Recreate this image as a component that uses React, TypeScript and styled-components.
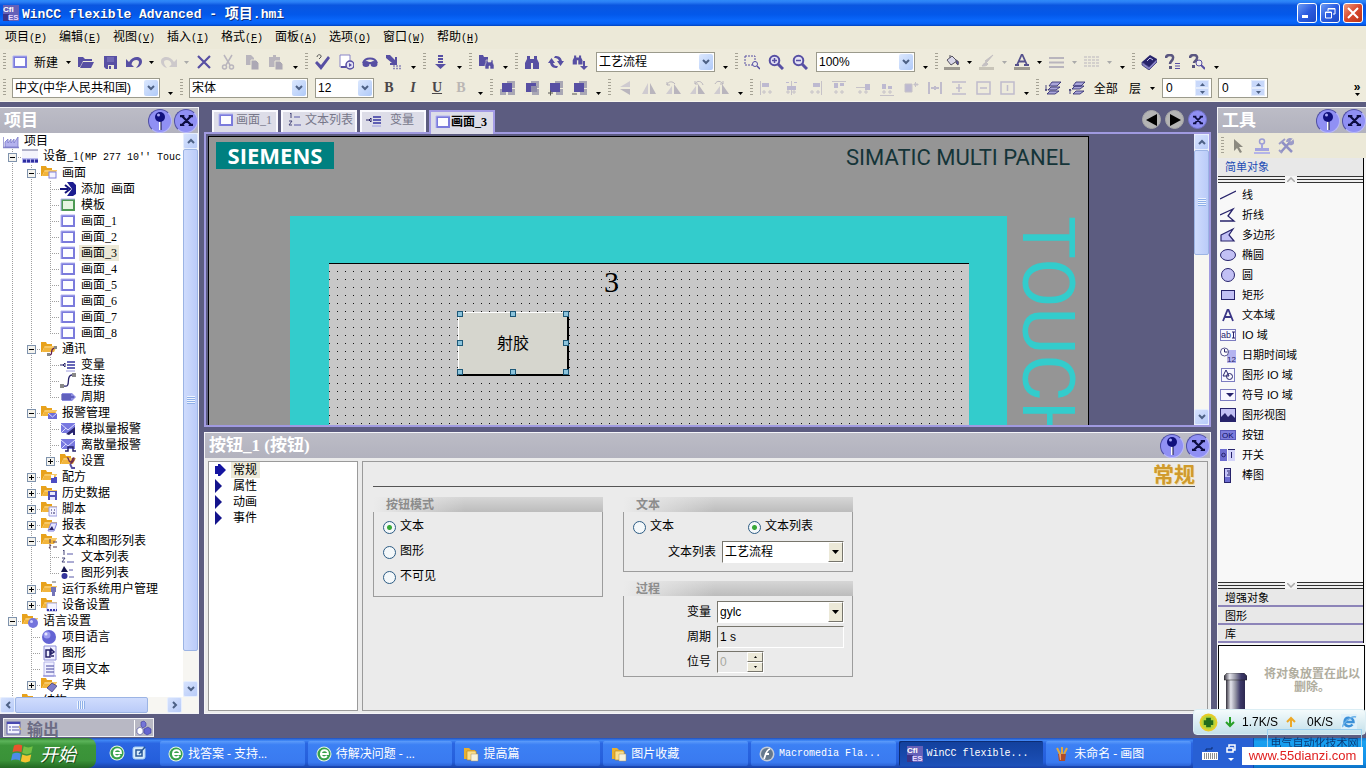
import React from 'react';
import styled, { createGlobalStyle, css } from 'styled-components';

const cjk = '"Noto Sans CJK SC", sans-serif';
const song = `"Liberation Serif", ${cjk}`;
const ui = `"Liberation Sans", ${cjk}`;

const Global = createGlobalStyle`
  * { box-sizing: border-box; }
  body { margin: 0; overflow: hidden; font: 12px/16px ${song}; color: #000; background: #5c5c80; }
  button, input, select { font: inherit; color: inherit; margin: 0; padding: 0; border-radius: 0; }
  button { background: none; border: 0; }
  svg { display: block; flex: none; }
`;

const Page = styled.div`
  height: 100vh;
  display: flex;
  flex-direction: column;
  background: #5c5c80;
`;

/* ---------- text ---------- */

const Mono = styled.span`
  font-family: "Liberation Mono", monospace;
  font-size: 10px;
`;

/* ---------- icons ---------- */

const V = '#574fa3';
const N = '#27236b';
const G = '#b9b5bd';
const L = '#c2c0f4';

const screenIcon = (edge: string, fill: string) => (
  <>
    <rect x="1" y="2" width="14" height="12" fill={edge} />
    <rect x="3" y="4" width="10" height="8" fill={fill} />
    <path d="M1 14V2h14" fill="none" stroke="#b4b4f0" strokeWidth="1" />
  </>
);
const folder = (
  <>
    <path d="M0 1h5l1 2h5v2H4L1 11H0z" fill="#e8a21c" />
    <path d="M4 5h12l-3 6H1z" fill="#f2b53c" />
    <path d="M4 6h11" stroke="#fbdc94" />
  </>
);
const magnifier = (
  <>
    <circle cx="6.5" cy="6.5" r="4.8" fill="#e4e2f4" stroke={V} strokeWidth="2" />
    <path d="M10 10l5 5" stroke={V} strokeWidth="3" />
  </>
);
const binoc = (
  <path d="M3 2h3v3h4V2h3v3l2 4v6H9V9H7v6H1V9l2-4z" fill={V} />
);
const turnTri = (
  <>
    <path d="M7 3v11H1z" fill="#cfcbd0" />
    <path d="M9 3v11h6z" fill={G} />
  </>
);
const leanTri = (
  <>
    <path d="M7 6v8H1z" fill="#cfcbd0" />
    <path d="M9 4v10h7z" fill={G} />
  </>
);
const pages = (extra: React.ReactNode, a: string, b: string) => (
  <>
    <rect x="8" y="1" width="8" height="7" fill="#a9a7b4" />
    <rect x="1" y="9" width="6" height="6" fill={a} />
    <rect x="9" y="9" width="7" height="6" fill={b} />
    <rect x="3" y="3" width="10" height="9" fill={V} />
    {extra}
  </>
);
const alignIcon = (line: string, a: string) => (
  <>
    <path d={line} stroke="#c6c2c8" fill="none" strokeWidth="1" />
    <path d={a} fill="#bdb9d0" />
    <path d="M3 12h4M5 10v4M9 12h4M11 10v4" stroke="#c6c2c8" />
  </>
);

const icons: Record<string, React.ReactNode> = {
  screen: screenIcon('#7b7bdc', '#fdfdff'),
  template: screenIcon('#4d9a54', '#e6f5e2'),
  open: <path d="M0 3h5l2 2h7v2H5l-3 6H0zM5 8h11l-3 6H2z" fill={V} />,
  save: (
    <>
      <path d="M2 2h13v13H4l-2-2z" fill={V} />
      <path d="M5 3h7v5H5z" fill="#6f68b4" />
      <path d="M6 11h6v4H6z" fill="#ece9d8" />
      <path d="M7 12h2v3H7z" fill={V} />
    </>
  ),
  undo: <path d="M0 5v8h8L5.500 10.500C6 5 13 5 13 8c0 3-2 4-3 6 4-1 6-4 6-6.500C16 2 7 1 3 8z" fill={V} />,
  redo: <path d="M16 5v8H8l2.500-2.500C10 5 3 5 3 8c0 3 2 4 3 6-4-1-6-4-6-6.500C0 2 9 1 13 8z" fill="#cdc9cb" />,
  del: <path d="M2 2l12 12M14 2L2 14" stroke={V} strokeWidth="2.200" fill="none" />,
  cut: (
    <g fill="none" stroke={G} strokeWidth="1.500">
      <path d="M4 1l6 10M12 1L6 11" />
      <circle cx="4.500" cy="13" r="2" />
      <circle cx="11.500" cy="13" r="2" />
    </g>
  ),
  copy: (
    <>
      <path d="M2 1h5l3 3v7H2z" fill={G} />
      <path d="M7 6h5l3 3v7H7z" fill="#aca8b4" stroke="#ece9d8" />
    </>
  ),
  paste: (
    <>
      <path d="M1 3h4V1h3v2h4v10H1z" fill={G} />
      <path d="M7 7h5l3 3v6H7z" fill="#aca8b4" stroke="#ece9d8" />
    </>
  ),
  check: (
    <>
      <path d="M1 9l2-2 4 4 7-9 2 2-9 12z" fill={V} />
      <path d="M3 3c0-3 5-3 4 0L5 5" fill="none" stroke="#555" />
    </>
  ),
  run: (
    <>
      <path d="M2 1h10v12H2z" fill="#fff" stroke="#8a85c8" />
      <path d="M3 13h5" stroke={V} strokeWidth="2" />
      <circle cx="12" cy="11" r="4" fill="#e4e2f4" stroke={V} strokeWidth="1.500" />
      <path d="M11 9l3 2-3 2z" fill={V} />
    </>
  ),
  glasses: (
    <>
      <path d="M1 9c2-6 12-6 14 0" fill="none" stroke={V} strokeWidth="2" />
      <ellipse cx="4" cy="10" rx="3.500" ry="3" fill={V} />
      <ellipse cx="12" cy="10" rx="3.500" ry="3" fill={V} />
      <path d="M7 9h2" stroke={V} strokeWidth="2" />
    </>
  ),
  transfer: (
    <>
      <path d="M0 1h4l5 5V3h2v8H4V9h2L0 4z" fill={V} />
      <path d="M7 12h9M7 14.500h9" stroke="#8d89b8" strokeWidth="1.500" strokeDasharray="2 1" />
    </>
  ),
  down: <path d="M6 1h5v2H6zM6 4h5v2H6zM6 7h5v2H6zM3 10h11l-5.500 5z" fill={V} />,
  findin: (
    <>
      <path d="M1 1h4l1 2h4v9H1z" fill={V} />
      <path d="M8 6h2v2h3V6h2v3l1 2v4h-4v-3h-1v3H7v-4l1-2z" fill={V} stroke="#ece9d8" strokeWidth=".6" />
    </>
  ),
  binoc,
  refresh: (
    <>
      <path d="M0 9l3.500-5L7 9H5c1 3 3 3 5 3l-1 2c-4 0-6-1-7-5z" fill={V} />
      <path d="M16 7l-3.500 5L9 7h2c-1-3-3-3-5-3l1-2c4 0 6 1 7 5z" fill={V} />
    </>
  ),
  findnext: (
    <>
      <g transform="scale(.7)">{binoc}</g>
      <path d="M11 7h2v5h3l-4 4-4-4h3z" fill={V} />
    </>
  ),
  marquee: (
    <>
      <rect x="1" y="2" width="10" height="9" fill="none" stroke={V} strokeDasharray="2 1" />
      <circle cx="11" cy="10" r="2.500" fill="#eee" stroke={V} />
      <path d="M13 12l3 3" stroke={V} strokeWidth="1.500" />
    </>
  ),
  zoomin: <>{magnifier}<path d="M4 6.500h5M6.500 4v5" stroke={V} strokeWidth="1.500" /></>,
  zoomout: <>{magnifier}<path d="M4 6.500h5" stroke={V} strokeWidth="1.500" /></>,
  fill: (
    <>
      <path d="M3 6l5-4 5 5-6 4z" fill="#d8d6e8" stroke="#55515f" />
      <path d="M6 4V1M12 6c3 1 3 3 2 5-2-1-2-3-2-5z" fill={V} stroke="#55515f" />
      <rect x="0" y="13" width="16" height="3" fill="#9d9990" />
    </>
  ),
  brush: (
    <>
      <path d="M14 1L8 8l-2-1zM7 8l2 2c-1 2-4 2-6 2 1-1 2-3 4-4z" fill="#c4c0c2" stroke="#c4c0c2" />
      <rect x="0" y="13" width="15" height="3" fill="#c8c4b8" />
    </>
  ),
  font: (
    <>
      <path d="M3 11L8 0l5 11M5 7.500h6M1 11h4M10 11h5" stroke="#55518c" strokeWidth="1.800" fill="none" />
      <rect x="0" y="13" width="16" height="3" fill="#9d9990" />
    </>
  ),
  lines: <path d="M0 4h15M0 8.500h15M0 13h15" stroke={G} strokeWidth="2" />,
  dashes: <path d="M0 3h15M0 6h15M0 9h15M0 12h15" stroke={G} strokeDasharray="3 1" />,
  book: (
    <>
      <path d="M1 8l8-7 7 4-8 8z" fill={N} />
      <path d="M1 8l7 5 8-8v3l-8 8-7-5z" fill="#8580c4" stroke={N} strokeWidth=".7" />
      <path d="M6 7l3-3 3 2" fill="none" stroke="#c9c6ee" />
    </>
  ),
  help: (
    <>
      <path d="M1 4c0-4 8-4 7 0 0 3-3 3-3 6" fill="none" stroke="#5a5680" strokeWidth="2.500" />
      <rect x="4" y="12" width="3" height="3" fill="#5a5680" />
      <path d="M10 9.500h5M10 12h5M10 14.500h5" stroke={V} />
    </>
  ),
  helpfind: (
    <>
      <path d="M1 4c0-4 8-4 7 0 0 3-3 3-3 5" fill="none" stroke="#5a5680" strokeWidth="2.500" />
      <rect x="3" y="11" width="3" height="3" fill="#5a5680" />
      <circle cx="10" cy="9" r="3" fill="#eee" stroke={V} />
      <path d="M12 11l4 4" stroke={V} strokeWidth="2" />
    </>
  ),
  order1: pages(null, '#a9a7b4', '#a9a7b4'),
  order2: pages(<rect x="8" y="6" width="6" height="6" fill="#8f8caa" />, '#ece9d8', '#a9a7b4'),
  order3: pages(<path d="M1 13h5M3.500 10.500v5" stroke="#555" />, '#ece9d8', '#a9a7b4'),
  order4: pages(<path d="M1 14h5" stroke="#555" />, '#ece9d8', '#a9a7b4'),
  flipv: <><path d="M13 1v6H3z" fill="#cfcbd0" /><path d="M3 9h10v6z" fill={G} /></>,
  fliph: turnTri,
  rotl: <>{leanTri}<path d="M2 5c1-4 6-4 8-1M2 2v3h3" stroke={G} fill="none" /></>,
  rotr: <>{leanTri}<path d="M6 4c2-4 7-3 8 1M6 1v3h3" stroke={G} fill="none" /></>,
  rot: <>{leanTri}<path d="M2 4c2-4 6-3 8 0M10 1v3H7" stroke={G} fill="none" /></>,
  al1: alignIcon('M1.500 1v14', 'M3 3h7v4H3z'),
  al2: alignIcon('M8.500 1v14', 'M4 6h9v4H4zM3 2h3v1H3zM11 2h3v1h-3z'),
  al3: alignIcon('M14.500 1v14', 'M6 3h7v4H6z'),
  al4: alignIcon('M1 1.500h14', 'M3 3h4v5H3zM9 3h4v3H9z'),
  al5: alignIcon('M1 7.500h14', 'M10 4h5v6h-5z'),
  al6: alignIcon('M1 15.500h14', 'M3 4h4v5H3zM9 6h4v3H9z'),
  al7: <path d="M2 4h7v8H2zM11 4h4v1h-4zM12.500 2v5" fill="#bdb9d0" stroke="#c6c2c8" />,
  al8: <path d="M2 2v12M14 2v12M4 8h8M8 6v4" stroke="#c0bccc" strokeWidth="2" fill="none" />,
  al9: <path d="M1 2h14M1 14h14M8 4v8M5 8h6" stroke="#c0bccc" strokeWidth="1.500" fill="none" />,
  al10: <path d="M2 2h13v12H2zM5 8h7" stroke="#c0bccc" strokeWidth="1.500" fill="none" />,
  al11: <path d="M2 2h13v12H2zM8.500 5v6" stroke="#c0bccc" strokeWidth="1.500" fill="none" />,
  layer1: (
    <g stroke={N} fill="#a9a5d8" strokeWidth=".8">
      <path d="M7 2h9l-4 4H4zM6 7h9l-4 3H3zM5 11h9l-4 3H2z" />
      <path d="M1 5v5M0 9l1 2 1-2" fill="none" />
    </g>
  ),
  layer2: (
    <g stroke={N} fill="#a9a5d8" strokeWidth=".8">
      <path d="M7 2h9l-4 4H4zM6 6h9l-4 3H3zM7 11h8l-4 3H4z" />
      <path d="M1 14v-5M0 11l1-2 1 2" fill="none" />
    </g>
  ),
  project: (
    <>
      <path d="M0 4v11M0 14.500h16" stroke="#8886cc" strokeWidth="1.500" />
      <path d="M2 14V9l3-3v4l3-4v4l3-4v4l4-6v10z" fill="#b4b2ee" stroke="#7a78c8" strokeWidth=".8" />
    </>
  ),
  device: (
    <>
      <rect x="0" y="1" width="16" height="8" fill="#f4f4fc" />
      <path d="M0 1h16" stroke="#6c6c94" />
      <rect x="0" y="9" width="16" height="5" fill="#b8b8f0" />
      <path d="M1 12h15" stroke="#2c2ca0" strokeWidth="3" strokeDasharray="3 1" />
    </>
  ),
  add: (
    <>
      <path d="M7 1h6l3 3v9l-3 2H7l5-7z" fill="#1c1c90" />
      <path d="M0 8h8M5 4l5 4-5 4" stroke="#14147c" strokeWidth="2" fill="none" />
    </>
  ),
  folderScreen: <>{folder}<rect x="8" y="7" width="7" height="6" fill="#f4f4ff" stroke="#8080dc" /></>,
  folderComm: <>{folder}<path d="M7 14c7 1 0-7 8-7" fill="none" stroke="#5c1c50" strokeWidth="1.300" /><rect x="13" y="5" width="3" height="3" fill="#888" /><rect x="6" y="12" width="3" height="3" fill="#888" /></>,
  folderMail: <>{folder}<path d="M7 8h9v6H7z" fill="#6c6cd8" /><path d="M7 8l4.500 4L16 8" stroke="#dcdcff" fill="none" /></>,
  folderSet: <>{folder}<path d="M7 5c2-1 1 4 3.500 4S12 4 14 5c1 3-2 4-3.500 6" fill="none" stroke="#6c2c50" strokeWidth="1.300" /><path d="M10 11l2 4h3" fill="none" stroke={V} strokeWidth="1.800" /></>,
  folderRecipe: <>{folder}<path d="M10 6h3v8h-3zM13 8h3v6h-3z" fill="#4c4cc4" /><path d="M10 6h3v3h-3z" fill="#fff" /></>,
  folderSave: <>{folder}<path d="M7 6h9v9H7z" fill="#5050b8" /><path d="M9 7h5v3H9zM9 12h5v3H9z" fill="#e8e8ff" /></>,
  folderScript: <>{folder}<path d="M8 6h8v9H8z" fill="#f4f4ff" stroke="#9c9ce0" /><path d="M10 9h1M13 9h1M10 12h1M12 12h2" stroke={N} /></>,
  folderReport: <>{folder}<path d="M7 14l3-8h6l-3 8z" fill="#e4e4ff" stroke="#8080dc" /><path d="M8 13l3-4 2 4z" fill={N} /></>,
  folderList: <>{folder}<path d="M9 6v4M8 12h2l-2 3h2M12 9h4M12 14h4" fill="none" stroke="#553c50" /></>,
  folderUser: <>{folder}<path d="M10 6h5v5h-1v4h-3v-4h-1z" fill="#7474b8" /><path d="M11 1h4" stroke="#666" /></>,
  folderDevice: <>{folder}<path d="M6 6h10v8H6z" fill="#f4f4ff" stroke="#a8a8d8" /><path d="M6 13h10" stroke="#3434b0" strokeWidth="2" strokeDasharray="2 1" /></>,
  folderGlobe: <>{folder}<circle cx="11" cy="10" r="5" fill="#7474dc" /><circle cx="9.500" cy="8.500" r="1.500" fill="#d0d0ff" /></>,
  folderBook: <>{folder}<path d="M6 11l5-5 5 3-5 6z" fill="#7c7cc8" stroke={N} strokeWidth=".6" /></>,
  folder,
  tag: (
    <>
      <path d="M0 8h3l2-2v4L3 8" fill="none" stroke={N} />
      <path d="M7 5h8M7 8h8M7 11h8" stroke="#3434a0" strokeWidth="1.300" />
      <path d="M6 14h9" stroke="#9c9ce0" />
    </>
  ),
  link: (
    <>
      <path d="M4 13c8 2 1-11 8-11" fill="none" stroke={N} strokeWidth="1.300" />
      <rect x="12" y="0" width="4" height="4" fill="#888" />
      <rect x="0" y="11" width="4" height="4" fill="#888" />
    </>
  ),
  cycle: <><path d="M2 4h10l4 4-4 4H2z" fill="#8c8ce0" /><path d="M1 6h10M1 8h13M1 10h10" stroke="#34349c" /></>,
  mailA: <><path d="M1 2h14v10H1z" fill="#7878e0" /><path d="M1 3l7 6 7-6M1 12l5-5" stroke="#dcdcff" fill="none" /><path d="M6 13l9-7v8h-2v-3l-4 3z" fill={N} /></>,
  mailD: <><path d="M1 2h14v10H1z" fill="#7878e0" /><path d="M1 3l7 6 7-6M1 12l5-5" stroke="#dcdcff" fill="none" /><path d="M5 14h3v-4h5v4h3" fill="none" stroke={N} strokeWidth="1.500" /></>,
  textlist: <><path d="M3 2l1-1v5M2 9h3l-3 4h3" fill="none" stroke="#444478" /><path d="M7 5h6M7 13h7" stroke="#5858a8" /></>,
  graphlist: <><path d="M4 1l4 6H1z" fill="#14144c" /><circle cx="4.500" cy="11" r="3" fill="#34349c" /><path d="M9 5h4M9 12h5" stroke="#5858a8" /></>,
  globe: <><circle cx="8" cy="8" r="7" fill="#6464d4" /><circle cx="6" cy="6" r="3.500" fill="#9c9cf0" /><circle cx="5" cy="5" r="1.500" fill="#e4e4ff" /></>,
  graphic: <><path d="M3 1h12v14H3z" fill="#f0f0ff" stroke="#8c8cd8" /><path d="M5 5h4v7H5zM10 4l3 3-3 2zM10 11h3" fill="none" stroke={N} strokeWidth="1.500" /></>,
  doc: <><path d="M3 1h10v14H3z" fill="#f0f0ff" stroke="#b4b4e8" /><path d="M5 5h8M5 8h8M5 11h8" stroke="#44449c" /><path d="M2 15h13" stroke="#7c7cd0" /></>,
  tLine: <path d="M0 12L16 4" stroke={N} strokeWidth="1.300" />,
  tPoly: <path d="M0 8l13-6-5 7 6 5H0" fill="none" stroke={N} strokeWidth="1.300" />,
  tPolygon: <path d="M1 8l12-6-4 6 5 6H1z" fill={L} stroke={N} strokeWidth="1.200" />,
  tEllipse: <ellipse cx="8" cy="8" rx="7.500" ry="5.500" fill={L} stroke={N} />,
  tCircle: <circle cx="8" cy="8" r="6.500" fill={L} stroke={N} />,
  tRect: <rect x="1.500" y="3.500" width="13" height="9" fill={L} stroke={N} />,
  tText: <path d="M3 14L7.500 3h1L13 14M5 10h6" fill="none" stroke="#3a3686" strokeWidth="1.800" />,
  tIo: (
    <>
      <rect x="0.500" y="2.500" width="15" height="11" fill="#f8f8ff" stroke="#7c7cc0" />
      <text x="1" y="11" fontSize="9" fontFamily="Liberation Sans" fill={N}>ab</text>
      <path d="M12 5h3M13.500 5v6M12 11h3" stroke={N} />
    </>
  ),
  tDate: (
    <>
      <rect x="7" y="3" width="9" height="13" fill="#b4b4f0" />
      <circle cx="4.500" cy="5" r="4" fill="#fff" stroke="#55518c" />
      <path d="M4.500 2v3h3" fill="none" stroke={N} />
      <text x="7" y="15" fontSize="8" fontFamily="Liberation Sans" fill={N}>12</text>
    </>
  ),
  tGio: <><rect x="1.500" y="1.500" width="13" height="13" fill="#f8f8ff" stroke="#7c7cc0" /><path d="M3 9l3-6 3 6z" fill="none" stroke={N} /><circle cx="9.500" cy="9.500" r="3" fill="none" stroke={N} /></>,
  tSio: <><rect x="0.500" y="2.500" width="15" height="11" fill="#f8f8ff" stroke="#7c7cc0" /><path d="M6 6h8l-4 4z" fill={N} /></>,
  tView: <><rect x="0.500" y="1.500" width="15" height="13" fill={L} stroke={N} /><path d="M1 14V10l4-4 3 4 3-3 4 4v3z" fill={N} /></>,
  tButton: <><rect x="0.500" y="3.500" width="15" height="9" fill="#7c7cdc" stroke="#5a5ab8" /><text x="2" y="11" fontSize="8" fontFamily="Liberation Sans" fill="#0c0c60">OK</text></>,
  tSwitch: <><rect x="0" y="2" width="7" height="12" fill="#6c6cd0" /><rect x="8" y="2" width="7" height="12" fill="#d4d4fa" /><circle cx="3.500" cy="8" r="1.800" fill="none" stroke={N} /><path d="M11.500 5v6M8 2.500h7" stroke={N} /></>,
  tBar: <><rect x="4.500" y="1.500" width="6" height="14" fill="#c4c4f6" stroke={N} /><path d="M5 10h5v5H5z" fill="#6c6cd0" /><path d="M7 4h3M8 6h2M7 8h3" stroke={N} /></>,
  pointer: <path d="M4 1l9 8H9l3 5-2 1-3-5-3 3z" fill="#8c8a80" />,
  stamp: <><circle cx="8" cy="3.500" r="2.500" fill="none" stroke="#9c9cd4" strokeWidth="1.500" /><path d="M7 6h2v4h6v3H1v-3h6z" fill="#a4a4e0" /><path d="M0 15h16" stroke="#b4b4e8" strokeWidth="2" /></>,
  tools: <><path d="M4 4l10 10M12 4L3 14" stroke="#9090c4" strokeWidth="2.500" /><path d="M1 6l6-5M9 4c0-4 4-3 4-3l-2 2 2 2 2-2c1 3-2 4-4 3M1 12l3 3" stroke="#9c9cc8" strokeWidth="1.800" fill="none" /></>,
  arrowItem: <path d="M1 4h3V2h2l6 6-6 6H4v-2H1z" fill="#1414a0" />,
  arrowTri: <path d="M1 1l7 7-7 7z" fill="#14148c" />,
  output: <><rect x="1" y="2" width="13" height="12" fill="#f4f4ff" stroke="#5c5ca8" /><path d="M1 3h13" stroke="#4848b0" strokeWidth="2" /><path d="M3 7h2M6 7h7M3 10h2M6 10h7" stroke="#5858a8" /><path d="M13 6l2 4" stroke="#e8c450" /></>,
  cubes: <g stroke="#3c3c98" strokeWidth=".6"><path d="M5 2l3-1 2 2v3L7 8 5 6z" fill="#7474d8" /><path d="M1 9l3-2 3 2v4l-3 2-3-2z" fill="#fff" /><path d="M8 9l4-2 3 2v4l-4 2-3-2z" fill="#6464d0" /></g>,
  browser: <><circle cx="8" cy="8" r="7.500" fill="#e4f6e4" /><circle cx="8" cy="8" r="6.500" fill="#37a14b" /><path d="M4 8h8c0-5-7-5-7 0 0 4 4 4 6 2" fill="none" stroke="#fff" strokeWidth="1.800" /></>,
  desktop: <><rect x="2" y="2" width="12" height="12" rx="2" fill="#d8ecfa" stroke="#a8d0f4" /><path d="M5 5h6v6H5zM8 9l6-7" fill="none" stroke="#285898" strokeWidth="1.500" /></>,
  taskFolder: <><path d="M1 2h5l2 2h4v9H1z" fill="#e8b030" /><path d="M4 5h9l1 9H4z" fill="#fbe08c" stroke="#b88418" strokeWidth=".6" /><path d="M8 8h7v7H8z" fill="#f6f2dc" stroke="#a89060" strokeWidth=".5" /></>,
  flash: <><circle cx="8" cy="8" r="7.500" fill="#c4ccd8" /><circle cx="8" cy="8" r="6" fill="#64788c" /><path d="M11 3c-4 1-4 5-6 10M6 8h4" stroke="#fff" strokeWidth="1.800" fill="none" /></>,
  paint: <><path d="M3 2l3 6M8 1v8M13 2l-3 6" stroke="#e0a840" strokeWidth="2" /><path d="M4 8h8l-1 7H5z" fill="#b04c28" /><path d="M5 8h2v6H6z" fill="#e89c6c" /></>,
  keyboard: <><rect x="0" y="7" width="16" height="8" fill="#fff" /><path d="M2 9h13M2 11h13M2 13h13" stroke="#222" strokeDasharray="1 1" /><path d="M4 6V4h6V2" fill="none" stroke="#0c2c70" /></>,
  windows: (
    <>
      <path d="M2 3c2-1 4-1 5.500 0L7 7.500C5 6.500 3 6.500 1 7.500z" fill="#e8542c" />
      <path d="M8.500 3.500c2 1 4 1 6 0l-1 4.500c-2 1-4 1-6 0z" fill="#74c044" />
      <path d="M1 8.500c2-1 4-1 5.500 0L6 13c-2-1-4-1-6 0z" fill="#4c8ce8" />
      <path d="M7.500 9c2 1 4 1 6 0l-1 4.500c-2 1-4 1-6 0z" fill="#f4c430" />
    </>
  ),
  wincc: (
    <>
      <rect width="16" height="16" fill="#6460b8" />
      <path d="M0 9h6v7H0z" fill="#3c3488" />
      <text x="0" y="7" fontSize="8" fontFamily="Liberation Sans" fontWeight="700" fill="#fff">Cfl</text>
      <text x="5" y="15" fontSize="8" fontFamily="Liberation Sans" fontWeight="700" fill="#e8d8ff">ES</text>
    </>
  ),
  plus: <><circle cx="8" cy="8" r="7.500" fill="#e8cc28" /><circle cx="8" cy="8" r="6" fill="#b8d438" /><path d="M8 4v8M4 8h8" stroke="#226c1c" strokeWidth="4" /></>,
  ie: <><rect x="0" y="0" width="16" height="16" fill="#dff0fa" /><path d="M3.500 8h9c0-5-8.500-6-9 0 0 5 6 5 8 2.500" fill="none" stroke="#3c90d8" strokeWidth="2.500" /><path d="M2 13c-2-2 8-12 13-10" fill="none" stroke="#68b0e8" strokeWidth="1.500" /></>,
};

const Icon = ({ name, size = 16 }: { name: string; size?: number }) => (
  <svg width={size} height={size} viewBox="0 0 16 16" aria-hidden="true">{icons[name]}</svg>
);

/* ---------- title bar ---------- */

const TitleBar = styled.header`
  height: 26px;
  flex: none;
  display: flex;
  align-items: center;
  gap: 3px;
  padding: 0 3px;
  background: linear-gradient(#2f8af8 0, #2a7ef5 8%, #0a56e0 20%, #0358ea 55%, #0a68fc 80%, #0560f4 92%, #0343bc);
  color: #fff;
`;
const TitleText = styled.h1`
  flex: 1;
  margin: 0;
  font: bold 14px/20px ${cjk};
  text-shadow: 1px 1px #10307c;
  ${Mono} { font-size: 13px; }
`;
const CaptionButton = styled.button<{ $close?: boolean }>`
  width: 20px;
  height: 20px;
  display: grid;
  place-items: center;
  border: 1px solid #fff;
  border-radius: 3px;
  background: ${p => (p.$close ? 'linear-gradient(135deg, #f09a7c, #d8482c 50%, #b83418)' : 'linear-gradient(135deg, #6c9cf4, #2c5ce0 50%, #1c48c4)')};
`;

/* ---------- menu and toolbars ---------- */

const MenuBar = styled.nav`
  height: 23px;
  flex: none;
  display: flex;
  align-items: center;
  background: #ece9d8;
`;
const MenuItem = styled.button`
  width: 54px;
  height: 20px;
  padding-left: 5px;
  text-align: left;
  white-space: nowrap;
`;
const ToolBar = styled.div`
  height: 26px;
  flex: none;
  display: flex;
  align-items: center;
`;
const Bars = styled.div`
  flex: none;
  background: #eeebdc;
  border-bottom: 1px solid #f6f4ec;
`;
const Grip = styled.span`
  width: 8px;
  height: 18px;
  flex: none;
  background: repeating-linear-gradient(#a5a294 0 1px, transparent 1px 3px) center / 3px 100% no-repeat;
`;
const ToolButton = styled.button`
  width: 24px;
  height: 24px;
  flex: none;
  display: grid;
  place-items: center;
`;
const FormatButton = styled(ToolButton)<{ $italic?: boolean; $under?: boolean; $off?: boolean }>`
  font: bold 14px/20px "Liberation Serif", serif;
  color: ${p => (p.$off ? '#bab6b4' : '#4a4648')};
  font-style: ${p => (p.$italic ? 'italic' : 'normal')};
  text-decoration: ${p => (p.$under ? 'underline' : 'none')};
`;
const DropButton = styled.button<{ $more?: boolean }>`
  width: ${p => (p.$more ? 14 : 11)}px;
  height: 24px;
  padding-top: ${p => (p.$more ? 10 : 0)}px;
  flex: none;
  display: grid;
  place-items: center;
`;
const TextTool = styled.button<{ $w: number }>`
  width: ${p => p.$w}px;
  padding-left: 2px;
  flex: none;
  text-align: left;
  font-family: ${cjk};
`;
const FarEnd = styled.button`
  margin-left: auto;
  width: 18px;
  font: bold 12px/12px ${ui};
  display: grid;
  justify-items: center;
`;

const Caret = ({ dim }: { dim?: boolean }) => (
  <svg width="5" height="3" viewBox="0 0 5 3" aria-hidden="true"><path d="M0 0h5L2.500 3z" fill={dim ? '#aaa' : '#000'} /></svg>
);
const More = () => <DropButton $more aria-label="更多"><Caret /></DropButton>;
const Tools = ({ names }: { names: string[] }) => (
  <>{names.map(n => <ToolButton key={n} aria-label={n}><Icon name={n} /></ToolButton>)}</>
);

const ComboFrame = styled.span<{ $w: number }>`
  width: ${p => p.$w}px;
  height: 20px;
  margin: 0 3px 0 4px;
  flex: none;
  display: grid;
  align-items: center;
  background: #fff;
  border: 1px solid #9b9a8c;
  > * { grid-area: 1 / 1; }
`;
const PlainSelect = styled.select`
  appearance: none;
  width: 100%;
  height: 18px;
  border: 0;
  padding-left: 2px;
  background: transparent;
  font: 12px/16px ${ui};
`;
const XpArrow = styled.span`
  width: 14px;
  height: 16px;
  margin-right: 1px;
  justify-self: end;
  display: grid;
  place-items: center;
  border-radius: 2px;
  background: linear-gradient(135deg, #dce8fe, #b0caf8);
  pointer-events: none;
`;
const Chevron = ({ dir = 'down' }: { dir?: 'up' | 'down' | 'left' | 'right' }) => {
  const d = { down: 'M1 2l3 3 3-3', up: 'M1 6l3-3 3 3', left: 'M6 1L3 4l3 3', right: 'M2 1l3 3-3 3' }[dir];
  return <svg width="8" height="8" viewBox="0 0 8 8" aria-hidden="true"><path d={d} fill="none" stroke="#4d6185" strokeWidth="2" /></svg>;
};
const Combo = ({ w, value, label }: { w: number; value: string; label: string }) => (
  <ComboFrame $w={w}>
    <PlainSelect aria-label={label} defaultValue={value}><option>{value}</option></PlainSelect>
    <XpArrow><Chevron /></XpArrow>
  </ComboFrame>
);

const SpinFrame = styled.span`
  width: 50px;
  height: 20px;
  margin: 0 2px 0 4px;
  flex: none;
  display: flex;
  align-items: center;
  background: #fff;
  border: 1px solid #9b9a8c;
  input { flex: 1; min-width: 0; border: 0; padding-left: 3px; background: none; font-family: ${ui}; }
`;
const SpinArrows = styled.span`
  width: 14px;
  height: 16px;
  margin-right: 2px;
  display: grid;
  grid-template-rows: 1fr 1fr;
  button { display: grid; place-items: center; background: #c8d8fa; border: 1px solid #e4ecfc; overflow: hidden; }
`;
const Spin = ({ label }: { label: string }) => (
  <SpinFrame>
    <input aria-label={label} defaultValue="0" />
    <SpinArrows>
      <button aria-label="增加"><svg width="5" height="3" viewBox="0 0 5 3"><path d="M0 3h5L2.500 0z" fill="#4d6185" /></svg></button>
      <button aria-label="减少"><svg width="5" height="3" viewBox="0 0 5 3"><path d="M0 0h5L2.500 3z" fill="#4d6185" /></svg></button>
    </SpinArrows>
  </SpinFrame>
);

/* ---------- shared panel parts ---------- */

const Workspace = styled.main`
  flex: 1;
  min-height: 0;
  display: flex;
  padding-top: 5px;
`;
const Panel = styled.section`
  display: flex;
  flex-direction: column;
  min-height: 0;
  background: #ebebeb;
  border: 1px solid #f4f4f8;
`;
const PanelHead = styled.div`
  height: 25px;
  flex: none;
  display: flex;
  align-items: center;
  gap: 2px;
  padding-left: 4px;
  background: linear-gradient(#bcbcc6, #b2b2be);
  color: #fff;
`;
const PanelTitle = styled.h2`
  flex: 1;
  margin: 0;
  font: bold 17px/24px ${song};
  white-space: nowrap;
`;
const RoundButton = styled.button<{ $size?: number; $grey?: boolean }>`
  width: ${p => p.$size || 24}px;
  height: ${p => p.$size || 24}px;
  flex: none;
  display: grid;
  place-items: center;
  border-radius: 50%;
  border: 1px solid ${p => (p.$grey ? '#a8a8a8' : '#7474cc')};
  background: ${p => (p.$grey ? '#b4b4b4' : '#9090f4')};
  ${p => !p.$size && css`border-color: #5050a4 #b8b8f8 #b8b8f8 #5050a4;`}
`;
const Cross = ({ size = 12 }: { size?: number }) => (
  <svg width={size} height={size} viewBox="0 0 12 12" aria-hidden="true"><path d="M2 2l8 8M10 2l-8 8M0 2h4M8 2h4M0 10h4M8 10h4" stroke="#0c0c40" strokeWidth="2" /></svg>
);
const PanelButtons = () => (
  <>
    <RoundButton aria-label="固定">
      <svg width="14" height="20" viewBox="0 0 14 20" aria-hidden="true">
        <path d="M7 10v9" stroke="#fff" strokeWidth="2" />
        <path d="M8 10v9" stroke="#10103c" />
        <circle cx="7" cy="6" r="5" fill="#10107c" />
        <circle cx="5.500" cy="4" r="1.500" fill="#a8a8f8" />
      </svg>
    </RoundButton>
    <RoundButton aria-label="关闭"><Cross size={13} /></RoundButton>
  </>
);

const Track = styled.div<{ $row?: boolean }>`
  display: flex;
  flex: none;
  flex-direction: ${p => (p.$row ? 'row' : 'column')};
  ${p => (p.$row ? 'height: 16px; padding-right: 16px;' : 'width: 15px;')}
  background: #f7f6f2;
`;
const ScrollButton = styled.button`
  width: 15px;
  height: 16px;
  flex: none;
  display: grid;
  place-items: center;
  border: 1px solid #e6eefe;
  border-radius: 2px;
  background: linear-gradient(135deg, #d6e2fd, #b8cbf8);
`;
const Thumb = styled.div<{ $row?: boolean; $len: number }>`
  flex: 0 0 ${p => p.$len}%;
  display: grid;
  place-items: center;
  border: 1px solid #9cb4e4;
  border-radius: 2px;
  background: linear-gradient(${p => (p.$row ? '180deg' : '90deg')}, #cfdcfd, #bacbf8);
`;
const ThumbRidges = styled.span<{ $row?: boolean }>`
  width: 8px;
  height: 8px;
  background: repeating-linear-gradient(${p => (p.$row ? '90deg' : '180deg')}, #eef4fe 0 1px, #8fb0e8 1px 2px);
`;
const TrackSpace = styled.div`flex: 1;`;
const Scroll = ({ row, len }: { row?: boolean; len: number }) => (
  <Track $row={row}>
    <ScrollButton aria-label="向前"><Chevron dir={row ? 'left' : 'up'} /></ScrollButton>
    <Thumb $row={row} $len={len}><ThumbRidges $row={row} /></Thumb>
    <TrackSpace />
    <ScrollButton aria-label="向后"><Chevron dir={row ? 'right' : 'down'} /></ScrollButton>
  </Track>
);

/* ---------- project tree ---------- */

const Side = styled(Panel)`
  width: 199px;
  flex: none;
  margin-right: 5px;
  background: #fff;
  border-left: 0;
`;
const TreeArea = styled.div`
  flex: 1;
  min-height: 0;
  display: flex;
`;
const Tree = styled.ul`
  flex: 1;
  min-width: 0;
  overflow: hidden;
  margin: 0;
  padding: 0;
  list-style: none;
`;
const TreeRow = styled.li`
  height: 16px;
  display: flex;
  align-items: center;
  padding-left: 3px;
  white-space: pre;
`;
const TreeLabel = styled.span<{ $selected?: boolean }>`
  margin-left: 3px;
  padding: 0 2px;
  line-height: 16px;
  background: ${p => (p.$selected ? '#ece9d8' : 'transparent')};
`;
const Cell = ({ v, h, box }: { v?: 'full' | 'half'; h?: boolean; box?: string }) => (
  <svg width="19" height="16" viewBox="0 0 19 16" shapeRendering="crispEdges" aria-hidden="true">
    {v && <path d={v === 'full' ? 'M9.500 0v16' : 'M9.500 0v8'} stroke="#a0a0a0" strokeDasharray="1 1" />}
    {h && <path d="M9 8.500h10" stroke="#a0a0a0" strokeDasharray="1 1" />}
    {box && (
      <>
        <rect x="5.500" y="4.500" width="8" height="8" fill="#f4f3ee" stroke="#7f93ad" />
        <path d={box === '+' ? 'M7 8.500h5M9.500 6v5' : 'M7 8.500h5'} stroke="#000" />
      </>
    )}
  </svg>
);

type Row = [level: number, icon: string, text: string, box?: string, last?: boolean];
const rows: Row[] = [
  [0, 'project', '项目'],
  [1, 'device', '设备_1(MP 277 10\'\' Touc', '-'],
  [2, 'folderScreen', '画面', '-'],
  [3, 'add', '添加  画面'],
  [3, 'template', '模板'],
  ...[1, 2, 3, 4, 5, 6, 7, 8].map((n): Row => [3, 'screen', `画面_${n}`, undefined, n === 8]),
  [2, 'folderComm', '通讯', '-'],
  [3, 'tag', '变量'],
  [3, 'link', '连接'],
  [3, 'cycle', '周期', undefined, true],
  [2, 'folderMail', '报警管理', '-'],
  [3, 'mailA', '模拟量报警'],
  [3, 'mailD', '离散量报警'],
  [3, 'folderSet', '设置', '+', true],
  [2, 'folderRecipe', '配方', '+'],
  [2, 'folderSave', '历史数据', '+'],
  [2, 'folderScript', '脚本', '+'],
  [2, 'folderReport', '报表', '+'],
  [2, 'folderList', '文本和图形列表', '-'],
  [3, 'textlist', '文本列表'],
  [3, 'graphlist', '图形列表', undefined, true],
  [2, 'folderUser', '运行系统用户管理', '+'],
  [2, 'folderDevice', '设备设置', '+', true],
  [1, 'folderGlobe', '语言设置', '-'],
  [2, 'globe', '项目语言'],
  [2, 'graphic', '图形'],
  [2, 'doc', '项目文本'],
  [2, 'folderBook', '字典', '+', true],
  [1, 'folder', '结构'],
];

const splitLabel = (text: string) => {
  const at = text.indexOf('(');
  return at < 0 ? text : <>{text.slice(0, at)}<Mono>{text.slice(at)}</Mono></>;
};

const ProjectTree = () => (
  <Side>
    <PanelHead><PanelTitle>项目</PanelTitle><PanelButtons /></PanelHead>
    <TreeArea>
      <Tree>
        {rows.map(([level, icon, text, box, last]) => (
          <TreeRow key={text}>
            {Array.from({ length: Math.max(0, level - 1) }, (_, i) => <Cell key={i} v="full" />)}
            {level > 0 && <Cell v={last ? 'half' : 'full'} h box={box} />}
            <Icon name={icon} />
            <TreeLabel $selected={text === '画面_3'}>{splitLabel(text)}</TreeLabel>
          </TreeRow>
        ))}
      </Tree>
      <Scroll len={89} />
    </TreeArea>
    <Scroll row len={73} />
  </Side>
);

/* ---------- editor ---------- */

const Center = styled.div`
  flex: 1;
  min-width: 0;
  display: flex;
  flex-direction: column;
`;
const TabBar = styled.div`
  height: 25px;
  flex: none;
  display: flex;
  align-items: flex-end;
  gap: 3px;
  padding: 0 4px 0 8px;
`;
const Tab = styled.button<{ $active?: boolean; $w: number }>`
  width: ${p => p.$w}px;
  height: 22px;
  display: flex;
  align-items: center;
  gap: 2px;
  padding: 0 0 4px 4px;
  white-space: nowrap;
  color: #77778a;
  background: #dddde8;
  border: 2px solid #fafaff;
  border-bottom: 0;
  ${p => p.$active && css`
    height: 24px;
    margin-bottom: -2px;
    padding-bottom: 2px;
    z-index: 1;
    gap: 0;
    color: #000;
    font-weight: bold;
    border-color: #a49ce6;
  `}
`;
const TabNav = styled.div`
  margin: 0 0 3px auto;
  display: flex;
  gap: 4px;
`;
const EditorFrame = styled.div`
  flex: 1;
  min-height: 0;
  display: flex;
  border: 2px solid #a09ae0;
`;
const Canvas = styled.div`
  flex: 1;
  min-width: 0;
  overflow: hidden;
  padding: 2px 0 0 2px;
  display: flex;
`;
const Device = styled.div`
  width: 881px;
  flex: none;
  display: flex;
  flex-direction: column;
  background: #959595;
  border: 1px solid #000;
  border-bottom: 0;
`;
const DeviceHead = styled.div`
  height: 79px;
  flex: none;
  display: flex;
  justify-content: space-between;
  align-items: flex-start;
  padding: 5px 18px 0 7px;
`;
const Brand = styled.div`
  width: 118px;
  height: 27px;
  background: #008080;
  color: #fff;
  text-align: center;
  font: bold 22px/26px "Open Sans", sans-serif;
`;
const Model = styled.div`
  padding-top: 2px;
  font: 22px/28px Roboto, "Liberation Sans", sans-serif;
  color: #143438;
`;
const DeviceBody = styled.div`
  flex: 1;
  min-height: 0;
  display: flex;
  padding-left: 81px;
`;
const Bezel = styled.div`
  width: 717px;
  flex: none;
  display: flex;
  padding: 47px 38px 0 39px;
  background: #33cccc;
`;
const Screen = styled.div`
  position: relative;
  flex: 1;
  border-top: 1px solid #000;
  background: conic-gradient(from 0deg at 1px 1px, transparent 0 270deg, #111 270deg) 0 -1px / 8px 8px, #c8c8c8;
`;
const ScreenNumber = styled.div`
  position: absolute;
  left: 275px;
  top: 0;
  font: 30px/36px "Liberation Serif", serif;
`;
const HmiButton = styled.button`
  position: absolute;
  left: 129px;
  top: 48px;
  width: 111px;
  height: 64px;
  padding-bottom: 4px;
  background: #d6d6ce;
  border: solid;
  border-width: 1px 2px 2px 1px;
  border-color: #fff #000 #000 #fff;
  font: 16px/20px ${cjk};
`;
const Handle = styled.span<{ $x: number; $y: number }>`
  position: absolute;
  left: ${p => p.$x}px;
  top: ${p => p.$y}px;
  width: 6px;
  height: 6px;
  background: #8cc4dc;
  border: 1px solid #1c5878;
`;
const Touch = styled.div`
  writing-mode: vertical-rl;
  overflow: hidden;
  font: 72px/80px Roboto, "Liberation Sans", sans-serif;
  color: #33cccc;
`;

const handles = [[0, 0], [53, 0], [106, 0], [0, 29], [106, 29], [0, 58], [53, 58], [106, 58]];

const Editor = () => (
  <>
    <TabBar>
      <Tab $w={66}><Icon name="screen" />画面_1</Tab>
      <Tab $w={76}><Icon name="textlist" />文本列表</Tab>
      <Tab $w={66}><Icon name="tag" />&nbsp;&nbsp;变量</Tab>
      <Tab $w={66} $active><Icon name="screen" />画面_3</Tab>
      <TabNav>
        <RoundButton $size={19} $grey aria-label="上一个"><svg width="12" height="12" viewBox="0 0 12 12"><path d="M11 0v12L0 6z" /></svg></RoundButton>
        <RoundButton $size={19} $grey aria-label="下一个"><svg width="12" height="12" viewBox="0 0 12 12"><path d="M1 0v12l11-6z" /></svg></RoundButton>
        <RoundButton $size={19} aria-label="关闭"><Cross size={10} /></RoundButton>
      </TabNav>
    </TabBar>
    <EditorFrame>
      <Canvas>
        <Device>
          <DeviceHead><Brand>SIEMENS</Brand><Model>SIMATIC MULTI PANEL</Model></DeviceHead>
          <DeviceBody>
            <Bezel>
              <Screen>
                <ScreenNumber>3</ScreenNumber>
                <HmiButton>射胶</HmiButton>
                {handles.map(([x, y]) => <Handle key={`${x}-${y}`} $x={x + 128} $y={y + 47} />)}
              </Screen>
            </Bezel>
            <Touch>TOUCH</Touch>
          </DeviceBody>
        </Device>
      </Canvas>
      <Scroll len={36} />
    </EditorFrame>
  </>
);

/* ---------- properties ---------- */

const Properties = styled(Panel)`
  height: 282px;
  flex: none;
  margin-top: 5px;
`;
const PropBody = styled.div`
  flex: 1;
  min-height: 0;
  display: flex;
  gap: 4px;
  padding: 3px 2px 2px 3px;
`;
const PropNav = styled.ul`
  width: 150px;
  flex: none;
  margin: 0;
  padding: 0 5px;
  list-style: none;
  background: #fff;
  border: 1px solid #9a9a9a;
`;
const PropNavItem = styled.li`
  height: 16px;
  display: flex;
  align-items: center;
`;
const PropNavLabel = styled.span<{ $selected?: boolean }>`
  padding: 0 3px 0 2px;
  margin-left: 1px;
  background: ${p => (p.$selected ? '#ece9d8' : 'transparent')};
`;
const PropPage = styled.div`
  flex: 1;
  min-width: 0;
  padding: 0 12px 0 10px;
  border: 1px solid #9a9a9a;
`;
const PropTitle = styled.h3`
  margin: 0 0 10px;
  height: 25px;
  text-align: right;
  font: bold 21px/22px ${cjk};
  color: #d09a2c;
  text-shadow: 1px 1px #f6e4ac;
  border-bottom: 1px solid #555;
`;
const GroupRow = styled.div`
  display: flex;
  align-items: flex-start;
  gap: 20px;
`;
const GroupColumn = styled.div`
  display: flex;
  flex-direction: column;
  gap: 9px;
`;
const Group = styled.section<{ $h: number }>`
  width: 230px;
  height: ${p => p.$h}px;
  border: 1px solid #9c9c9c;
  border-top: 0;
`;
const GroupHead = styled.h4`
  margin: 0 -1px;
  height: 15px;
  padding-left: 13px;
  font: bold 12px/13px ${cjk};
  color: #8c8c8c;
  background: linear-gradient(90deg, #ebebeb, transparent 40%), linear-gradient(#d6d6d6, #bcbcbc);
`;
const RadioStack = styled.div`
  display: flex;
  flex-direction: column;
  gap: 9px;
  padding: 6px 0 0 9px;
`;
const RadioPair = styled.div`
  display: grid;
  grid-template-columns: 115px 1fr;
  padding: 6px 0 0 9px;
`;
const RadioLabel = styled.label`
  display: flex;
  align-items: center;
  gap: 4px;
  height: 16px;
`;
const Radio = styled.input`
  appearance: none;
  width: 13px;
  height: 13px;
  margin-top: 2px;
  border: 1px solid #2c5c84;
  border-radius: 50%;
  background: #f4f8fa;
  &:checked { background: radial-gradient(circle, #38a838 0 2px, #f4f8fa 3px); }
`;
const Field = styled.div<{ $end?: number }>`
  display: flex;
  align-items: center;
  justify-content: flex-end;
  gap: 6px;
  height: 25px;
  padding-right: ${p => p.$end || 8}px;
`;
const FieldFrame = styled.span<{ $w: number; $grey?: boolean }>`
  width: ${p => p.$w}px;
  height: 22px;
  display: flex;
  align-items: center;
  border: 1px solid;
  border-color: #77756c #fff #fff #77756c;
  background: ${p => (p.$grey ? '#e9e9e9' : '#fff')};
  input, select { flex: 1; width: 100%; min-width: 0; height: 18px; appearance: none; border: 0; padding-left: 2px; background: none; font-family: ${ui}; }
  input:disabled { color: #a8a8a0; }
`;
const ClassicArrow = styled.button`
  width: 15px;
  height: 20px;
  flex: none;
  display: grid;
  place-items: center;
  background: #ece9d8;
  border: 1px solid;
  border-color: #fff #77756c #77756c #fff;
`;
const ClassicSpin = styled.span`
  width: 16px;
  height: 20px;
  display: grid;
  grid-template-rows: 10px 10px;
  ${ClassicArrow} { height: 10px; width: 16px; }
`;
const BigCaret = () => <svg width="7" height="4" viewBox="0 0 7 4" aria-hidden="true"><path d="M0 0h7L3.500 4z" /></svg>;
const Fields = styled.div<{ $top: number }>`padding-top: ${p => p.$top}px;`;

const PropertyPanel = () => (
  <Properties>
    <PanelHead><PanelTitle>按钮_1 (按钮)</PanelTitle><PanelButtons /></PanelHead>
    <PropBody>
      <PropNav>
        {['常规', '属性', '动画', '事件'].map((t, i) => (
          <PropNavItem key={t}><Icon name={i ? 'arrowTri' : 'arrowItem'} /><PropNavLabel $selected={!i}>{t}</PropNavLabel></PropNavItem>
        ))}
      </PropNav>
      <PropPage>
        <PropTitle>常规</PropTitle>
        <GroupRow>
          <Group $h={100}>
            <GroupHead>按钮模式</GroupHead>
            <RadioStack>
              {['文本', '图形', '不可见'].map((t, i) => (
                <RadioLabel key={t}><Radio type="radio" name="mode" defaultChecked={i === 0} />{t}</RadioLabel>
              ))}
            </RadioStack>
          </Group>
          <GroupColumn>
            <Group $h={75}>
              <GroupHead>文本</GroupHead>
              <RadioPair>
                <RadioLabel><Radio type="radio" name="kind" />文本</RadioLabel>
                <RadioLabel><Radio type="radio" name="kind" defaultChecked />文本列表</RadioLabel>
              </RadioPair>
              <Fields $top={5}>
                <Field>
                  <label htmlFor="list">文本列表</label>
                  <FieldFrame $w={122}>
                    <select id="list" defaultValue="工艺流程"><option>工艺流程</option></select>
                    <ClassicArrow aria-label="展开"><BigCaret /></ClassicArrow>
                  </FieldFrame>
                </Field>
              </Fields>
            </Group>
            <Group $h={96}>
              <GroupHead>过程</GroupHead>
              <Fields $top={3}>
                <Field>
                  <label htmlFor="tag">变量</label>
                  <FieldFrame $w={127}>
                    <input id="tag" defaultValue="gylc" />
                    <ClassicArrow aria-label="展开"><BigCaret /></ClassicArrow>
                  </FieldFrame>
                </Field>
                <Field>
                  <label htmlFor="cyc">周期</label>
                  <FieldFrame $w={127} $grey><input id="cyc" defaultValue="1 s" readOnly /></FieldFrame>
                </Field>
                <Field $end={88}>
                  <label htmlFor="bit">位号</label>
                  <FieldFrame $w={47} $grey>
                    <input id="bit" defaultValue="0" disabled />
                    <ClassicSpin>
                      <ClassicArrow aria-label="增加"><svg width="3" height="2" viewBox="0 0 3 2"><path d="M0 2h3L1.500 0z" /></svg></ClassicArrow>
                      <ClassicArrow aria-label="减少"><svg width="3" height="2" viewBox="0 0 3 2"><path d="M0 0h3L1.500 2z" /></svg></ClassicArrow>
                    </ClassicSpin>
                  </FieldFrame>
                </Field>
              </Fields>
            </Group>
          </GroupColumn>
        </GroupRow>
      </PropPage>
    </PropBody>
  </Properties>
);

/* ---------- tool box ---------- */

const ToolBox = styled(Panel)`
  width: 149px;
  flex: none;
  margin-left: 6px;
  background: #f8f8f8;
  border-right: 0;
`;
const ToolStrip = styled.div`
  height: 25px;
  flex: none;
  display: flex;
  align-items: center;
  background: #ece9d8;
`;
const Shelf = styled.div`
  flex: 1;
  min-height: 0;
  display: flex;
  flex-direction: column;
  margin-right: 2px;
  border-right: 1px solid #000;
`;
const ShelfHead = styled.button<{ $open?: boolean }>`
  height: 18px;
  flex: none;
  padding: 0 0 2px 7px;
  text-align: left;
  font: 11px/14px ${cjk};
  color: ${p => (p.$open ? '#1c4cb4' : '#000')};
  background: #e8e8e8;
  ${p => !p.$open && css`padding-bottom: 0; border-bottom: 2px solid #8c84b8;`}
`;
const Ruler = styled.div`
  height: 7px;
  flex: none;
  display: grid;
  place-items: center;
  background: repeating-linear-gradient(#333 0 1px, #f0f0f0 1px 3px);
`;
const RulerMark = styled.span`
  width: 12px;
  height: 7px;
  display: grid;
  place-items: center;
  background: #f4f4f4;
`;
const ToolList = styled.ul`
  flex: 1;
  margin: 0;
  padding: 2px 0 0 2px;
  list-style: none;
`;
const ToolItem = styled.li`
  height: 20px;
  display: flex;
  align-items: center;
  gap: 6px;
  font: 11px/16px "Liberation Sans", ${cjk};
`;
const Bin = styled.div`
  height: 68px;
  flex: none;
  display: flex;
  align-items: flex-end;
  justify-content: space-between;
  margin: 2px 1px 0 0;
  padding: 0 3px 0 5px;
  background: #fff;
  border: 1px solid #000;
`;
const BinText = styled.p`
  align-self: flex-start;
  margin: 20px 0 0;
  width: 98px;
  text-align: center;
  font: bold 12px/13px ${cjk};
  color: #b0ad9e;
`;

const tools: [string, string][] = [
  ['tLine', '线'], ['tPoly', '折线'], ['tPolygon', '多边形'], ['tEllipse', '椭圆'], ['tCircle', '圆'],
  ['tRect', '矩形'], ['tText', '文本域'], ['tIo', 'IO 域'], ['tDate', '日期时间域'], ['tGio', '图形 IO 域'],
  ['tSio', '符号 IO 域'], ['tView', '图形视图'], ['tButton', '按钮'], ['tSwitch', '开关'], ['tBar', '棒图'],
];

const RulerArrow = ({ up }: { up?: boolean }) => (
  <Ruler><RulerMark><svg width="8" height="5" viewBox="0 0 8 5"><path d={up ? 'M0 5l4-4 4 4' : 'M0 0l4 4 4-4'} fill="none" stroke="#aaa" strokeWidth="1.500" /></svg></RulerMark></Ruler>
);

const ToolPanel = () => (
  <ToolBox>
    <PanelHead><PanelTitle>工具</PanelTitle><PanelButtons /></PanelHead>
    <ToolStrip><Grip /><Tools names={['pointer', 'stamp', 'tools']} /></ToolStrip>
    <Shelf>
      <ShelfHead $open>简单对象</ShelfHead>
      <RulerArrow up />
      <ToolList>
        {tools.map(([icon, text]) => <ToolItem key={text}><Icon name={icon} />{text}</ToolItem>)}
      </ToolList>
      <RulerArrow />
      <ShelfHead>增强对象</ShelfHead>
      <ShelfHead>图形</ShelfHead>
      <ShelfHead>库</ShelfHead>
    </Shelf>
    <Bin>
      <svg width="23" height="39" viewBox="0 0 23 39" aria-hidden="true">
        <defs><linearGradient id="bin"><stop offset="0" stopColor="#33303c" /><stop offset=".25" stopColor="#e4e4ec" /><stop offset=".5" stopColor="#9494a4" /><stop offset=".75" stopColor="#3c3868" /><stop offset="1" stopColor="#2c2850" /></linearGradient></defs>
        <path d="M2 5h19v34H2z" fill="url(#bin)" />
        <path d="M3 0h17l3 3v4H0V3z" fill="url(#bin)" stroke="#222" strokeWidth=".5" />
      </svg>
      <BinText>将对象放置在此以删除。</BinText>
    </Bin>
  </ToolBox>
);

/* ---------- bottom bars ---------- */

const OutputStrip = styled.div`
  height: 24px;
  flex: none;
  padding: 4px 0 0 3px;
`;
const OutputTab = styled.div`
  width: 151px;
  height: 19px;
  display: flex;
  align-items: center;
  gap: 5px;
  padding: 0 1px 0 2px;
  border: 1px solid #f0f0f4;
  background: #b8b8c4;
  font: bold 16px/16px ${cjk};
  color: #6c6c84;
`;
const OutputEnd = styled.span`
  margin-left: auto;
  padding-left: 1px;
  border-left: 1px solid #fff;
`;
const TaskBar = styled.footer`
  height: 30px;
  flex: none;
  display: flex;
  align-items: stretch;
  background: linear-gradient(#1f4fbc 0, #3f86f4 8%, #2b66e2 18%, #245edb 80%, #1941a5);
  color: #fff;
`;
const Start = styled.button`
  width: 96px;
  flex: none;
  display: flex;
  align-items: center;
  gap: 5px;
  padding-left: 11px;
  border-radius: 0 8px 8px 0;
  background: linear-gradient(#2f7c2c 0, #5cb45a 10%, #3c963a 25%, #3a9238 75%, #236822);
  font: italic 18px/24px ${cjk};
  text-shadow: 1px 1px #1c4c1c;
`;
const Quick = styled.div`
  width: 64px;
  flex: none;
  display: flex;
  align-items: center;
  gap: 6px;
  padding-left: 13px;
`;
const Tasks = styled.div`
  flex: 1;
  min-width: 0;
  display: flex;
  gap: 3px;
  padding: 3px 2px 2px 0;
`;
const Task = styled.button<{ $active?: boolean }>`
  flex: 1 1 0;
  min-width: 0;
  display: flex;
  align-items: center;
  gap: 4px;
  padding-left: 8px;
  white-space: nowrap;
  overflow: hidden;
  border-radius: 2px;
  background: ${p => (p.$active ? 'linear-gradient(#12409c, #1c50b8)' : 'linear-gradient(#5c9cfa, #3c80f4 15%, #3a7af0 85%, #2c62d4)')};
  box-shadow: ${p => (p.$active ? 'inset 1px 1px #0c2c74' : 'none')};
`;
const TrayTools = styled.div`
  width: 60px;
  flex: none;
  display: flex;
  align-items: center;
  gap: 8px;
  padding-left: 9px;
  background: #2860d4;
`;
const Tray = styled.div`
  width: 113px;
  flex: none;
  border-left: 1px solid #0c4cb0;
  background: linear-gradient(#1678d0 0, #18a0f0 12%, #1290e8 80%, #0c70c4);
`;
const Overlay = styled.div`
  position: fixed;
  right: 0;
  bottom: 0;
  display: flex;
  flex-direction: column;
  align-items: flex-end;
`;
const Speed = styled.div`
  width: 173px;
  height: 26px;
  display: flex;
  align-items: center;
  padding: 0 4px 0 5px;
  border-radius: 4px;
  background: linear-gradient(#f4fbfc, #c4e0ea);
  border: 1px solid #dceef4;
  font: 12px/16px ${ui};
`;
const SpeedValue = styled.span<{ $w: number }>`
  width: ${p => p.$w}px;
  text-align: right;
  margin-right: 8px;
  white-space: nowrap;
`;
const SiteName = styled.div`
  width: 95px;
  height: 18px;
  margin: -6px 4px 0 0;
  padding-top: 4px;
  text-align: center;
  white-space: nowrap;
  border: 1px solid #9cd0f0;
  border-bottom: 0;
  font: 11px/16px ${cjk};
  color: #0c3c78;
`;
const SiteUrl = styled.a`
  position: relative;
  width: 121px;
  height: 18px;
  margin: 0 3px 3px 0;
  text-align: center;
  text-decoration: none;
  background: #fff;
  color: #e02020;
  font: 13px/18px "Liberation Sans", sans-serif;
`;

const menus = [['项目', 'P'], ['编辑', 'E'], ['视图', 'V'], ['插入', 'I'], ['格式', 'F'], ['面板', 'A'], ['选项', 'O'], ['窗口', 'W'], ['帮助', 'H']];
const tasks: [string, React.ReactNode, boolean?][] = [
  ['browser', '找答案 - 支持...'],
  ['browser', '待解决问题 - ...'],
  ['taskFolder', '提高篇'],
  ['taskFolder', '图片收藏'],
  ['flash', <Mono>Macromedia Fla...</Mono>],
  ['wincc', <Mono>WinCC flexible...</Mono>, true],
  ['paint', '未命名 - 画图'],
];

export default function App() {
  return (
    <Page>
      <Global />
      <TitleBar>
        <Icon name="wincc" />
        <TitleText><Mono>WinCC flexible Advanced - </Mono>项目<Mono>.hmi</Mono></TitleText>
        <CaptionButton aria-label="最小化"><svg width="12" height="12" viewBox="0 0 12 12"><path d="M1 9.500h6" stroke="#fff" strokeWidth="3" /></svg></CaptionButton>
        <CaptionButton aria-label="还原"><svg width="12" height="12" viewBox="0 0 12 12"><path d="M4 4V1.500h7V7H9M1.500 5h6v6h-6zM1 5.500h7M4 2h7" fill="none" stroke="#fff" /></svg></CaptionButton>
        <CaptionButton $close aria-label="关闭"><svg width="12" height="12" viewBox="0 0 12 12"><path d="M1 1l10 10M11 1L1 11" stroke="#fff" strokeWidth="2" /></svg></CaptionButton>
      </TitleBar>
      <MenuBar>
        {menus.map(([t, k]) => <MenuItem key={t}>{t}<Mono>(<u>{k}</u>)</Mono></MenuItem>)}
      </MenuBar>
      <Bars>
        <ToolBar>
          <Grip />
          <Tools names={['screen']} />
          <TextTool $w={31}>新建</TextTool>
          <DropButton aria-label="新建选项"><Caret /></DropButton>
          <Tools names={['open', 'save', 'undo']} />
          <DropButton aria-label="撤销列表"><Caret /></DropButton>
          <Tools names={['redo']} />
          <DropButton aria-label="重做列表"><Caret dim /></DropButton>
          <Tools names={['del', 'cut', 'copy', 'paste']} />
          <More /><Grip />
          <Tools names={['check', 'run', 'glasses', 'transfer']} />
          <More /><Grip />
          <Tools names={['down']} />
          <More /><Grip />
          <Tools names={['findin']} />
          <More /><Grip />
          <Tools names={['binoc', 'refresh', 'findnext']} />
          <Combo w={119} value="工艺流程" label="查找" />
          <More /><Grip />
          <Tools names={['marquee', 'zoomin', 'zoomout']} />
          <Combo w={99} value="100%" label="缩放" />
          <More /><Grip />
          {['fill', 'brush', 'font', 'lines', 'dashes'].map((n, i) => (
            <React.Fragment key={n}>
              <Tools names={[n]} />
              <DropButton aria-label={`${n} 选项`}><Caret dim={i % 2 === 1 || i === 4} /></DropButton>
            </React.Fragment>
          ))}
          <More /><Grip />
          <Tools names={['book', 'help', 'helpfind']} />
          <More />
        </ToolBar>
        <ToolBar>
          <Grip />
          <Combo w={148} value="中文(中华人民共和国)" label="语言" />
          <More /><Grip />
          <Combo w={119} value="宋体" label="字体" />
          <Combo w={59} value="12" label="字号" />
          <FormatButton>B</FormatButton>
          <FormatButton $italic>I</FormatButton>
          <FormatButton $under>U</FormatButton>
          <FormatButton $off>B</FormatButton>
          <More /><Grip />
          <Tools names={['order1', 'order2', 'order3', 'order4']} />
          <More /><Grip />
          <Tools names={['flipv', 'fliph', 'rotl', 'rotr', 'rot']} />
          <More /><Grip />
          <Tools names={['al1', 'al2', 'al3', 'al4', 'al5', 'al6', 'al7', 'al8', 'al9', 'al10', 'al11']} />
          <More /><Grip />
          <Tools names={['layer1', 'layer2']} />
          <TextTool $w={38}>&nbsp;全部</TextTool>
          <TextTool $w={20}>层</TextTool>
          <DropButton aria-label="选择层"><Caret /></DropButton>
          <Spin label="X" />
          <Spin label="Y" />
          <FarEnd aria-label="更多工具">»<Caret /></FarEnd>
        </ToolBar>
      </Bars>
      <Workspace>
        <ProjectTree />
        <Center>
          <Editor />
          <PropertyPanel />
        </Center>
        <ToolPanel />
      </Workspace>
      <OutputStrip>
        <OutputTab><Icon name="output" />输出<OutputEnd><Icon name="cubes" /></OutputEnd></OutputTab>
      </OutputStrip>
      <TaskBar>
        <Start><Icon name="windows" size={24} />开始</Start>
        <Quick><Icon name="browser" /><Icon name="desktop" /></Quick>
        <Tasks>
          {tasks.map(([icon, text, active], i) => <Task key={i} $active={active}><Icon name={icon} />{text}</Task>)}
        </Tasks>
        <TrayTools>
          <Icon name="keyboard" />
          <svg width="10" height="18" viewBox="0 0 10 18" aria-hidden="true"><path d="M3 3V1h6v5H7M1 4h6v4H1z" fill="none" stroke="#fff" strokeWidth="1.500" /><path d="M2 14h6l-3 3z" fill="#fff" /></svg>
        </TrayTools>
        <Tray />
      </TaskBar>
      <Overlay>
        <Speed>
          <Icon name="plus" size={19} />
          <svg width="24" height="12" viewBox="0 0 24 12" aria-hidden="true"><path d="M12 1v8M8 6l4 4 4-4" fill="none" stroke="#28a028" strokeWidth="2" /></svg>
          <SpeedValue $w={36}>1.7K/S</SpeedValue>
          <svg width="10" height="12" viewBox="0 0 10 12" aria-hidden="true"><path d="M5 11V2M1 6l4-4 4 4" fill="none" stroke="#eca828" strokeWidth="2" /></svg>
          <SpeedValue $w={37}>0K/S</SpeedValue>
          <Icon name="ie" />
        </Speed>
        <SiteName>电气自动化技术网</SiteName>
        <SiteUrl href="#">www.55dianzi.com</SiteUrl>
      </Overlay>
    </Page>
  );
}
